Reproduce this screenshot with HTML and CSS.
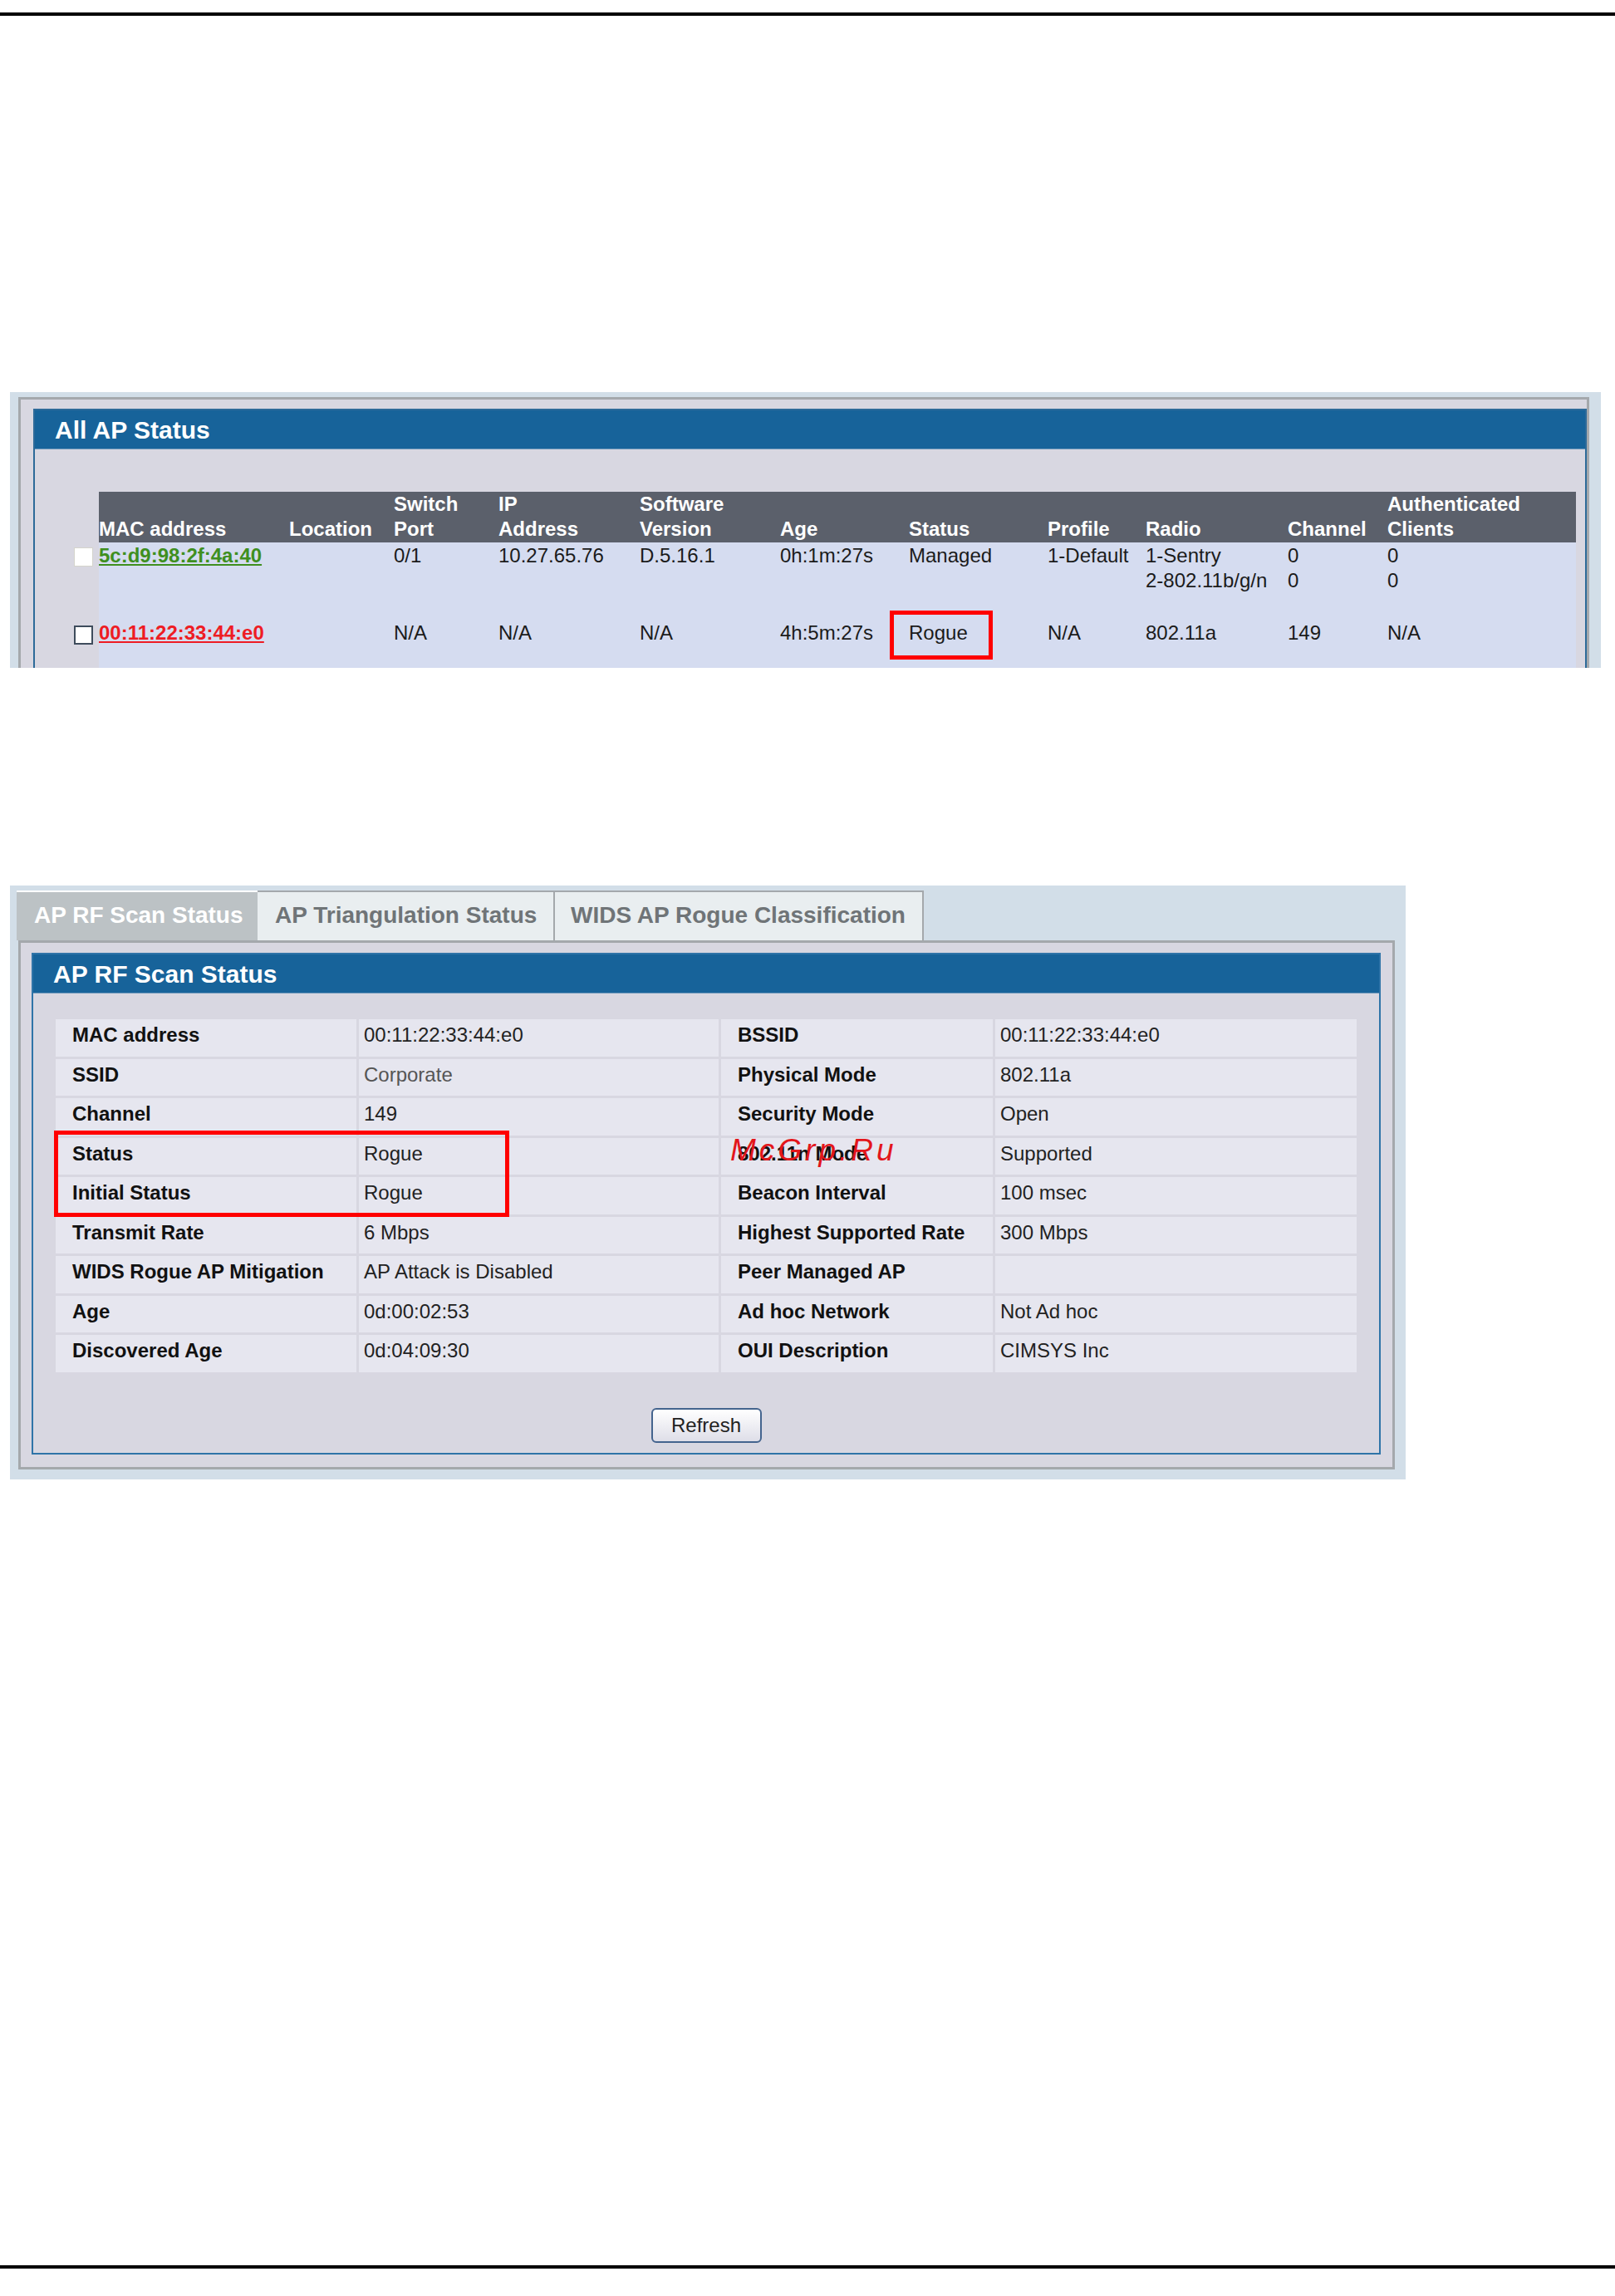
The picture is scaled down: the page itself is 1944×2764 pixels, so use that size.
FILE: index.html
```html
<!DOCTYPE html>
<html lang="en">
<head>
<meta charset="UTF-8" />
<meta name="viewport" content="width=device-width, initial-scale=1" />
<title>AP Status</title>
<link rel="stylesheet" href="styles.css">
</head>
<body>

  <hr class="rule rule-top">

  <!-- All AP Status (cropped screenshot) -->
  <div class="shot shot-all">
    <div class="frame">
      <div class="box">
        <div class="box-title">All AP Status</div>
        <div class="box-body">
          <table class="ap-list">
            <colgroup>
              <col class="c-pick"><col class="c-mac"><col class="c-loc"><col class="c-port">
              <col class="c-ip"><col class="c-sw"><col class="c-age"><col class="c-status">
              <col class="c-profile"><col class="c-radio"><col class="c-chan"><col class="c-auth">
            </colgroup>
            <thead>
              <tr>
                <th></th>
                <th>MAC address</th>
                <th>Location</th>
                <th>Switch<br>Port</th>
                <th>IP<br>Address</th>
                <th>Software<br>Version</th>
                <th>Age</th>
                <th>Status</th>
                <th>Profile</th>
                <th>Radio</th>
                <th>Channel</th>
                <th>Authenticated<br>Clients</th>
              </tr>
            </thead>
            <tbody>
              <tr>
                <td class="pick"><input type="checkbox" class="check"></td>
                <td><a href="#" class="mac mac-managed">5c:d9:98:2f:4a:40</a></td>
                <td></td>
                <td>0/1</td>
                <td>10.27.65.76</td>
                <td>D.5.16.1</td>
                <td>0h:1m:27s</td>
                <td>Managed</td>
                <td>1-Default</td>
                <td>1-Sentry<br>2-802.11b/g/n</td>
                <td>0<br>0</td>
                <td>0<br>0</td>
              </tr>
              <tr class="row-rogue">
                <td class="pick"><input type="checkbox" class="check check-dark"></td>
                <td><a href="#" class="mac mac-rogue">00:11:22:33:44:e0</a></td>
                <td></td>
                <td>N/A</td>
                <td>N/A</td>
                <td>N/A</td>
                <td>4h:5m:27s</td>
                <td><span class="flag">Rogue</span></td>
                <td>N/A</td>
                <td>802.11a</td>
                <td>149</td>
                <td>N/A</td>
              </tr>
            </tbody>
          </table>
        </div>
      </div>
    </div>
  </div>

  <!-- AP RF Scan Status -->
  <div class="shot shot-scan">
    <div class="tabs">
      <div class="tab tab-on tab-1">AP RF Scan Status</div>
      <div class="tab tab-off tab-2">AP Triangulation Status</div>
      <div class="tab tab-off tab-3">WIDS AP Rogue Classification</div>
    </div>
    <div class="frame">
      <div class="box">
        <div class="box-title">AP RF Scan Status</div>
        <div class="box-body">
          <table class="rf-table">
            <colgroup>
              <col class="k1"><col class="v1"><col class="k2"><col class="v2">
            </colgroup>
            <tbody>
              <tr>
                <td class="label">MAC address</td><td class="value">00:11:22:33:44:e0</td>
                <td class="label">BSSID</td><td class="value">00:11:22:33:44:e0</td>
              </tr>
              <tr>
                <td class="label">SSID</td><td class="value value-dim">Corporate</td>
                <td class="label">Physical Mode</td><td class="value">802.11a</td>
              </tr>
              <tr>
                <td class="label">Channel</td><td class="value">149</td>
                <td class="label">Security Mode</td><td class="value">Open</td>
              </tr>
              <tr>
                <td class="label boxed">Status</td><td class="value">Rogue</td>
                <td class="label has-mark">802.11n Mode<span class="mark">McGrp.Ru</span></td><td class="value">Supported</td>
              </tr>
              <tr>
                <td class="label">Initial Status</td><td class="value">Rogue</td>
                <td class="label">Beacon Interval</td><td class="value">100 msec</td>
              </tr>
              <tr>
                <td class="label">Transmit Rate</td><td class="value">6 Mbps</td>
                <td class="label">Highest Supported Rate</td><td class="value">300 Mbps</td>
              </tr>
              <tr>
                <td class="label">WIDS Rogue AP Mitigation</td><td class="value">AP Attack is Disabled</td>
                <td class="label">Peer Managed AP</td><td class="value"></td>
              </tr>
              <tr>
                <td class="label">Age</td><td class="value">0d:00:02:53</td>
                <td class="label">Ad hoc Network</td><td class="value">Not Ad hoc</td>
              </tr>
              <tr>
                <td class="label">Discovered Age</td><td class="value">0d:04:09:30</td>
                <td class="label">OUI Description</td><td class="value">CIMSYS Inc</td>
              </tr>
            </tbody>
          </table>
          <button class="refresh" type="button">Refresh</button>
        </div>
      </div>
    </div>
  </div>

  <hr class="rule rule-bottom">

</body>
</html>
```

FILE: styles.css
```css
*,
*::before,
*::after {
  box-sizing: border-box;
}

body {
  margin: 0;
  width: 1944px;
  background: #fff;
  color: #1b1b1b;
  font-family: "Liberation Sans", Arial, sans-serif;
  font-size: 24px;
}

/* page rules */
.rule {
  border: 0;
  height: 4px;
  margin: 0;
  background: #000;
}
.rule-top {
  margin-top: 15px;
}
.rule-bottom {
  margin-top: 946px;
}

/* screenshot panels */
.shot {
  margin-left: 12px;
  background: #d2dee8;
}

.frame {
  border: 3px solid #a4a8ac;
  background: #d8d7e1;
}

.box {
  border: 2px solid #2d6a99;
  background: #d8d7e1;
}

.box-title {
  background: #17639a;
  color: #fff;
  font-size: 30px;
  font-weight: bold;
  line-height: 44px;
  padding: 2px 0 0 24px;
  border-bottom: 1px solid #6f98bb;
}

/* All AP Status */
.shot-all {
  margin-top: 453px;
  width: 1915px;
  height: 332px;
  overflow: hidden;
  padding: 6px 0 0 10px;
}
.shot-all .frame {
  width: 1891px;
  padding: 11px 0 0 15px;
}
.shot-all .box-body {
  padding: 51px 11px 60px 0;
}

.ap-list {
  width: 1855px;
  table-layout: fixed;
  border-collapse: collapse;
  border-spacing: 0;
}
.c-pick { width: 77px; }
.c-mac { width: 229px; }
.c-loc { width: 126px; }
.c-port { width: 126px; }
.c-ip { width: 170px; }
.c-sw { width: 169px; }
.c-age { width: 155px; }
.c-status { width: 167px; }
.c-profile { width: 118px; }
.c-radio { width: 171px; }
.c-chan { width: 120px; }
.c-auth { width: 227px; }

.ap-list th {
  background: #5b606b;
  color: #fff;
  font-weight: bold;
  text-align: left;
  vertical-align: bottom;
  line-height: 30px;
  padding: 0 0 1px;
  white-space: nowrap;
}
.ap-list th:first-child {
  background: transparent;
}

.ap-list td {
  background: #d5dcf0;
  vertical-align: top;
  line-height: 30px;
  padding: 1px 0 0;
  white-space: nowrap;
}
.ap-list td.pick {
  background: transparent;
  padding-left: 47px;
}
.row-rogue td {
  padding-top: 33px;
  padding-bottom: 40px;
}

.check {
  appearance: none;
  display: block;
  width: 23px;
  height: 23px;
  margin: 5px 0 0;
  background: #fff;
  border: 1px solid #d4d4cc;
}
.check-dark {
  margin-top: 6px;
  border: 2px solid #3e4c5c;
}

.mac {
  font-weight: bold;
  text-decoration: underline;
}
.mac-managed {
  color: #3f8f1f;
}
.mac-rogue {
  color: #ee1c24;
}

.flag {
  position: relative;
  display: inline-block;
}
.flag::after {
  content: "";
  position: absolute;
  left: -23px;
  top: -12px;
  width: 124px;
  height: 59px;
  border: 5px solid #f00;
}

/* AP RF Scan Status */
.shot-scan {
  margin-top: 262px;
  width: 1680px;
  padding: 6px 13px 12px 8px;
}

.tabs {
  display: flex;
}
.tab {
  height: 60px;
  font-size: 28px;
  font-weight: bold;
  line-height: 56px;
  padding: 0 0 0 21px;
  white-space: nowrap;
}
.tab-on {
  background: #bcc2c5;
  color: #fff;
  border-top: 2px solid #fff;
}
.tab-off {
  background: #e9eef0;
  color: #6f7477;
  border-top: 2px solid #a4a8ac;
  border-right: 2px solid #a4a8ac;
}
.tab-1 { width: 290px; }
.tab-2 { width: 358px; }
.tab-3 { width: 444px; padding-left: 19px; }

.shot-scan .frame {
  margin-left: 2px;
  padding: 12px 14px 15px 13px;
}
.shot-scan .box {
  border-color: #2f74a8;
}
.shot-scan .box-body {
  padding: 28px 24px 12px;
}

.rf-table {
  width: 1572px;
  table-layout: fixed;
  border-collapse: separate;
  border-spacing: 3px;
}
.k1 { width: 362px; }
.v1 { width: 433px; }
.k2 { width: 327px; }
.v2 { width: 435px; }

.rf-table td {
  background: #e6e6ef;
  line-height: 36px;
  padding: 1px 0 7.5px;
  vertical-align: top;
  white-space: nowrap;
}
.rf-table .label {
  font-weight: bold;
  color: #111;
  padding-left: 20px;
}
.rf-table .value {
  color: #222;
  padding-left: 6px;
}
.rf-table .value-dim {
  color: #555;
}

.boxed {
  position: relative;
}
.boxed::after {
  content: "";
  position: absolute;
  left: -2px;
  top: -9px;
  width: 548px;
  height: 104px;
  border: 5px solid #f00;
}

.has-mark {
  position: relative;
}
.mark {
  position: absolute;
  left: 11px;
  top: -4px;
  color: #e3161b;
  font-size: 37px;
  font-style: italic;
  font-weight: normal;
  line-height: 37px;
  letter-spacing: 4px;
}

.refresh {
  display: block;
  width: 133px;
  height: 42px;
  margin: 40px auto 0;
  padding: 0;
  border: 2px solid #44648e;
  border-radius: 6px;
  background: linear-gradient(#fff, #dedee8);
  color: #222;
  font-family: "Liberation Sans", Arial, sans-serif;
  font-size: 24px;
}
```
